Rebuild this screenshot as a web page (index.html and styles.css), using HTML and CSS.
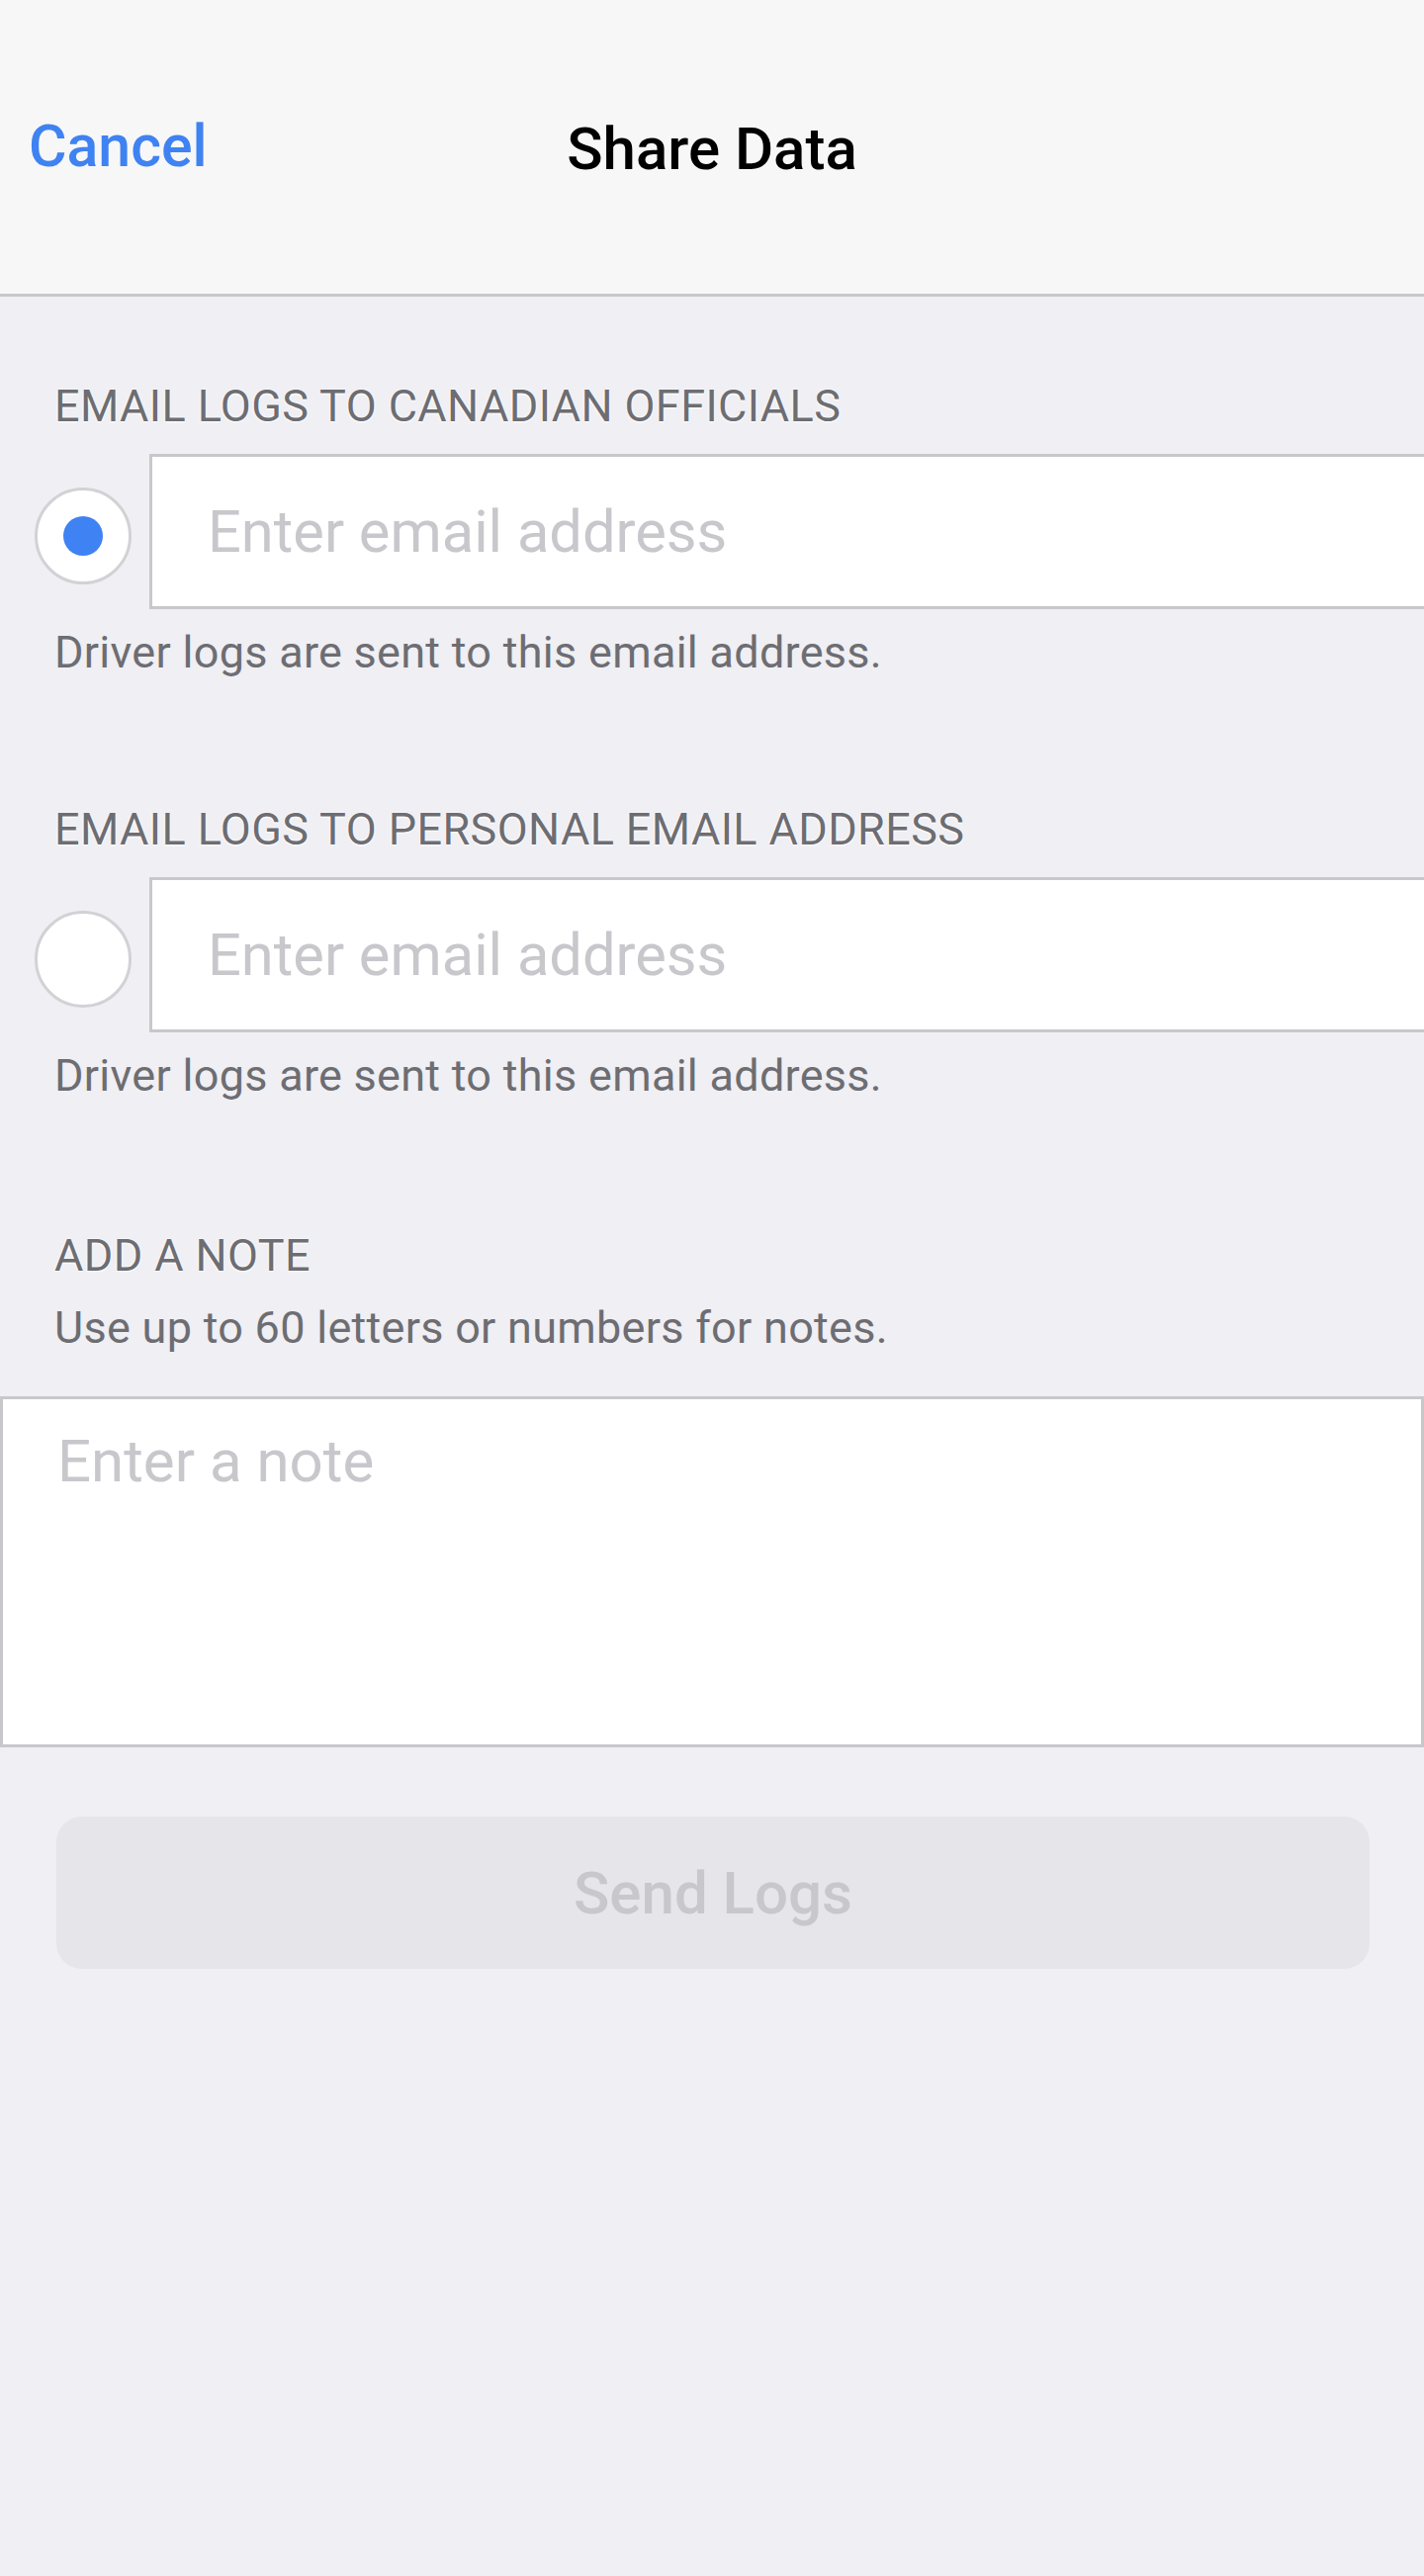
FILE: index.html
```html
<!DOCTYPE html>
<html lang="en">
<head>
<meta charset="utf-8">
<title>Share Data</title>
<link rel="stylesheet" href="styles.css">
</head>
<body>
<div class="screen">
  <header class="navbar">
    <a class="nav-cancel" href="#">Cancel</a>
    <h1 class="nav-title">Share Data</h1>
    <span class="nav-spacer"></span>
  </header>

  <main class="content">
    <section class="group">
      <div class="group-label">EMAIL LOGS TO CANADIAN OFFICIALS</div>
      <label class="email-row">
        <span class="radio radio-on"><span class="radio-dot"></span></span>
        <input class="email-input" type="email" placeholder="Enter email address">
      </label>
      <div class="group-help">Driver logs are sent to this email address.</div>
    </section>

    <section class="group">
      <div class="group-label">EMAIL LOGS TO PERSONAL EMAIL ADDRESS</div>
      <label class="email-row">
        <span class="radio"></span>
        <input class="email-input" type="email" placeholder="Enter email address">
      </label>
      <div class="group-help">Driver logs are sent to this email address.</div>
    </section>

    <section class="group group-note">
      <div class="group-label">ADD A NOTE</div>
      <div class="group-help group-help-top">Use up to 60 letters or numbers for notes.</div>
      <textarea class="note-input" placeholder="Enter a note"></textarea>
    </section>

    <div class="actions">
      <button class="send-btn" type="button" disabled>Send Logs</button>
    </div>
  </main>
</div>
</body>
</html>
```

FILE: styles.css
```css
* {
  box-sizing: border-box;
}

html, body {
  margin: 0;
  padding: 0;
}

body {
  background: #efeff4;
  font-family: Roboto, "Noto Sans", "Liberation Sans", sans-serif;
  color: #000;
}

.screen {
  width: 1440px;
  min-height: 2605px;
  overflow: hidden;
}

/* ---------- header ---------- */
.navbar {
  height: 300px;
  background: #f7f7f7;
  border-bottom: 3px solid #c8c7cc;
  display: grid;
  grid-template-columns: 1fr auto 1fr;
  align-items: start;
  padding-top: 116px;
}

.nav-cancel {
  justify-self: start;
  margin-top: -3px;
  padding-left: 29px;
  font-size: 59px;
  line-height: 70px;
  font-weight: 500;
  color: #3f82f2;
  text-decoration: none;
}

.nav-title {
  margin: 0;
  font-size: 60px;
  line-height: 70px;
  font-weight: 500;
  color: #000;
}

/* ---------- groups ---------- */
.content {
  display: flex;
  flex-direction: column;
  padding-top: 85px;
}

.group {
  display: flex;
  flex-direction: column;
  margin-bottom: 127px;
}

.group-note {
  margin-top: 3px;
  margin-bottom: 0;
}

.group-label,
.group-help {
  padding-left: 55px;
  font-size: 45px;
  line-height: 52px;
  color: #6d6d72;
}

.group-label {
  letter-spacing: 0.4px;
  text-shadow: 0 0 3px #fff, 0 1px 2px #fff;
}

.group-help {
  letter-spacing: 0.28px;
}

.email-row {
  display: flex;
  align-items: center;
  margin-top: 22px;
  margin-bottom: 18px;
  padding-left: 35px;
  gap: 18px;
}

.radio {
  flex: 0 0 98px;
  width: 98px;
  height: 98px;
  margin-top: 9px;
  border: 3px solid #d2d2d6;
  border-radius: 50%;
  background: #fff;
  display: flex;
  align-items: center;
  justify-content: center;
}

.radio-dot {
  width: 40px;
  height: 40px;
  border-radius: 50%;
  background: #3f82f3;
}

.email-input {
  flex: 1;
  min-width: 0;
  height: 157px;
  margin: 0;
  padding: 0 0 0 56px;
  border: 3px solid #c8c7cc;
  border-right: none;
  border-radius: 0;
  background: #fff;
  font-family: inherit;
  font-size: 59.6px;
  color: #000;
  outline: none;
}

.email-input::placeholder,
.note-input::placeholder {
  color: #c7c7cc;
  opacity: 1;
}

.group-help-top {
  margin-top: 21px;
}

.note-input {
  display: block;
  width: 1440px;
  height: 355px;
  margin: 43px 0 0;
  padding: 28px 55px 0;
  border: 3px solid #c8c7cc;
  border-radius: 0;
  background: #fff;
  font-family: inherit;
  font-size: 60px;
  line-height: 70px;
  color: #000;
  resize: none;
  outline: none;
}

/* ---------- button ---------- */
.actions {
  padding: 70px 55px 0 57px;
}

.send-btn {
  display: flex;
  align-items: center;
  justify-content: center;
  width: 100%;
  height: 154px;
  margin: 0;
  padding: 0;
  border: none;
  border-radius: 26px;
  background: #e5e5ea;
  font-family: inherit;
  font-size: 60px;
  font-weight: 500;
  color: #c7c7cc;
}
```
